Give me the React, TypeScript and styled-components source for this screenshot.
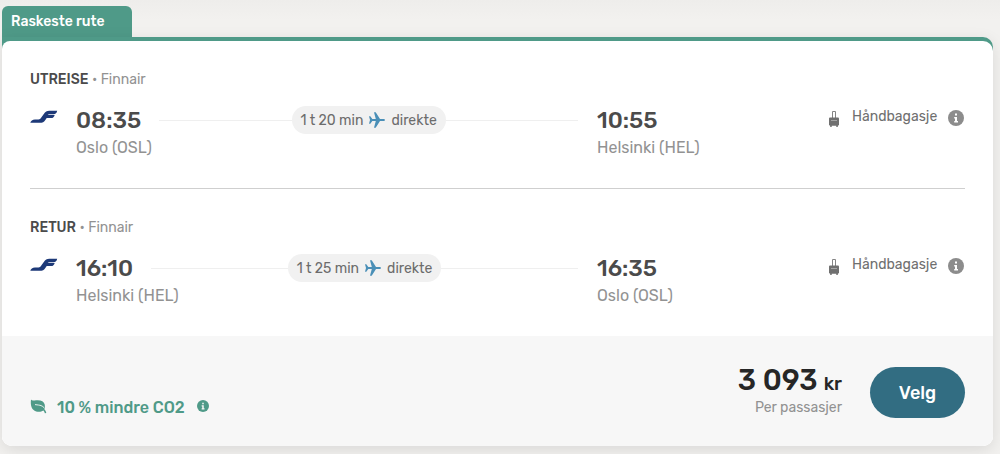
import React from "react";
import styled, { createGlobalStyle } from "styled-components";

const GlobalStyle = createGlobalStyle`
  * { box-sizing: border-box; }
  body {
    margin: 0;
    background: linear-gradient(#eeedeb, #f2f1ef 20px) #f2f1ef;
    font-family: Rubik, Roboto, "Liberation Sans", sans-serif;
    color: #4b4b4b;
  }
`;

const Page = styled.main`
  padding: 6px 7px 8px 2px;
`;

const Tab = styled.div`
  width: 130px;
  height: 31px;
  padding: 0 9px;
  border-radius: 6px 6px 0 0;
  background: #4f9a88;
  color: #fff;
  font-size: 14px;
  font-weight: 500;
  line-height: 32px;
  white-space: nowrap;
`;

const Ticket = styled.article`
  padding-top: 4px;
  border-radius: 0 10px 10px 10px;
  background: linear-gradient(#4f9a88 20px, #fff 20px);
  box-shadow: 0 4px 16px rgba(0, 0, 0, 0.1);
`;

const Card = styled.div`
  overflow: hidden;
  border-radius: 8px 10px 10px 10px;
  background: #fff;
`;

const Legs = styled.div`
  padding: 0 28px;
`;

const Leg = styled.section`
  height: 147px;
  padding-top: 29px;

  & + & {
    height: 148px;
    border-top: 1px solid #cfcfcf;
  }
`;

const LegTitle = styled.h2`
  margin: 0 0 16px;
  font-size: 14px;
  font-weight: 400;
  line-height: 20px;
  color: #929292;

  strong {
    font-weight: 500;
    color: #4b4b4b;
  }
`;

const LegRow = styled.div`
  display: grid;
  grid-template-columns: 46px minmax(0, 521fr) minmax(0, 231fr) 137px;
`;

const LogoCell = styled.div`
  padding-top: 4px;

  svg {
    display: block;
  }
`;

const TimeLine = styled.div`
  display: flex;
  align-items: center;
  height: 28px;
  padding-right: 19px;
`;

const Time = styled.span`
  font-size: 23px;
  font-weight: 500;
  line-height: 28px;
`;

const City = styled.div`
  margin-top: 4px;
  font-size: 16px;
  line-height: 20px;
  color: #929292;
`;

const Track = styled.div`
  display: flex;
  flex: 1;
  align-items: center;
  margin-left: 18px;

  &::before,
  &::after {
    content: "";
    flex: 1;
    height: 1px;
    background: #efefef;
  }
`;

const Duration = styled.span`
  display: flex;
  align-items: center;
  gap: 5px;
  height: 28px;
  padding: 0 9px;
  border-radius: 14px;
  background: #f1f1f1;
  color: #6c6c6c;
  font-size: 14px;
  white-space: nowrap;
`;

const Baggage = styled.div`
  display: flex;
  align-items: center;
  height: 26px;
  font-size: 14px;
  line-height: 20px;
  color: #6f6f6f;
`;

const BaggageLabel = styled.span`
  margin: 0 auto 4px 12px;
`;

const IconButton = styled.button`
  display: flex;
  padding: 0;
  border: 0;
  background: none;
  color: inherit;
  cursor: pointer;
`;

const Footer = styled.footer`
  display: flex;
  align-items: flex-end;
  height: 110px;
  padding: 0 28px 28px;
  background: #f7f7f7;
`;

const Emission = styled.div`
  display: flex;
  align-items: center;
  margin-right: auto;
  color: #4f9a88;
  font-size: 16px;
  font-weight: 500;
  line-height: 20px;

  svg {
    margin-bottom: 4px;
  }
`;

const EmissionLabel = styled.span`
  margin: 0 12px 0 10px;
`;

const Price = styled.div`
  margin-right: 28px;
  text-align: right;
`;

const Amount = styled.div`
  display: flex;
  align-items: baseline;
  justify-content: flex-end;
  gap: 6px;
  color: #262626;
  font-size: 29px;
  font-weight: 500;
  line-height: 28px;

  small {
    font-size: 19px;
  }
`;

const PerPassenger = styled.div`
  font-size: 14px;
  line-height: 20px;
  color: #929292;
`;

const SelectButton = styled.button`
  width: 95px;
  height: 51px;
  border: 0;
  border-radius: 26px;
  background: #326d82;
  color: #fff;
  font: inherit;
  font-size: 18px;
  font-weight: 500;
  cursor: pointer;
`;

const AirlineLogo = () => (
  <svg width="28" height="14" viewBox="0 0 28 14" role="img" aria-label="Finnair">
    <path
      fill="#1d3978"
      d="M.3 12.800C.8 11 2.500 9.500 5 9.400h3.500c1.300 0 1.800-.6 2.600-1.600l2.700-3.900C15.400 1.600 16.800.8 19.300.8H27.200c-.4 2.200-1.500 3.400-3.700 3.400h-4.200c-.8 0-1.200.2-1.600.7h7c-.5 2-1.700 3.100-3.500 3.100h-4.500l-1.200 1.700c-1.400 2.300-3 3.100-5.800 3.100Z"
    />
  </svg>
);

const Plane = () => (
  <svg width="18" height="18" viewBox="0 0 18 18" aria-hidden="true">
    <path
      fill="#4a8fb7"
      d="M1 5.200h1.300l2 2.800h3.500L6 1.200h1.700L12 8h3.200c1 0 1.800.4 1.800 1s-.8 1-1.800 1H12l-4.300 6.800H6L7.800 10H4.300l-2 2.800H1L2 9Z"
    />
  </svg>
);

const Suitcase = () => (
  <svg width="12" height="16" viewBox="0 0 12 16" aria-hidden="true">
    <path fill="none" stroke="#858585" d="M4.500 7V.5h3V7" />
    <path
      fill="#707070"
      d="M2.200 6.500h7.600c.7 0 1.200.5 1.200 1.200v5.800c0 .7-.5 1.200-1.200 1.200V16H8.300v-1.300H3.700V16H2.200v-1.300C1.500 14.700 1 14.200 1 13.500V7.700c0-.7.500-1.200 1.200-1.200Z"
    />
    <path stroke="#a4a4a4" d="M3 9.500h6" />
  </svg>
);

const Leaf = () => (
  <svg width="17" height="15" viewBox="0 0 17 15" aria-hidden="true">
    <path
      fill="#4f9a88"
      d="M1 .5C2 1.700 3.500 1.600 6 1.300c4.500-.5 8 .8 8.800 4.500.3 1.500.1 3-.4 4.500.8.8 1.500 2 1.900 3.700l-1.400.3c-.3-1.200-.8-2.100-1.500-2.900-2 1.400-4.700 1.800-7.200 1C1.700 11 .2 6.600 1 .5Z"
    />
    <path fill="none" stroke="#f7f7f7" strokeWidth=".9" d="M5 5.600c3 .4 4.700.5 6 1 1.300.5 2.300 1.200 3.200 2.200" />
  </svg>
);

const InfoIcon = ({ size, mark = "#fff" }: { size: number; mark?: string }) => (
  <svg width={size} height={size} viewBox="0 0 16 16" aria-hidden="true">
    <circle cx="8" cy="8" r="8" fill="currentColor" />
    <path fill={mark} d="M7 3.500h2v2H7ZM6.200 7H9v4h1v1.500H6.200V11H7V8.500h-.8Z" />
  </svg>
);

const InfoButton = styled(IconButton)`
  color: #8c8c8c;
  margin: 0 1px 2px 0;
`;

const legs = [
  { name: "UTREISE", depart: "08:35", from: "Oslo (OSL)", duration: "1 t 20 min", arrive: "10:55", to: "Helsinki (HEL)" },
  { name: "RETUR", depart: "16:10", from: "Helsinki (HEL)", duration: "1 t 25 min", arrive: "16:35", to: "Oslo (OSL)" },
];

export default function App() {
  return (
    <>
      <GlobalStyle />
      <Page>
        <Tab>Raskeste rute</Tab>
        <Ticket>
          <Card>
            <Legs>
              {legs.map((leg) => (
                <Leg key={leg.name}>
                  <LegTitle>
                    <strong>{leg.name}</strong> • Finnair
                  </LegTitle>
                  <LegRow>
                    <LogoCell>
                      <AirlineLogo />
                    </LogoCell>
                    <div>
                      <TimeLine>
                        <Time>{leg.depart}</Time>
                        <Track>
                          <Duration>
                            {leg.duration}
                            <Plane />
                            direkte
                          </Duration>
                        </Track>
                      </TimeLine>
                      <City>{leg.from}</City>
                    </div>
                    <div>
                      <TimeLine>
                        <Time>{leg.arrive}</Time>
                      </TimeLine>
                      <City>{leg.to}</City>
                    </div>
                    <Baggage>
                      <Suitcase />
                      <BaggageLabel>Håndbagasje</BaggageLabel>
                      <InfoButton type="button" aria-label="Om håndbagasje">
                        <InfoIcon size={16} />
                      </InfoButton>
                    </Baggage>
                  </LegRow>
                </Leg>
              ))}
            </Legs>
            <Footer>
              <Emission>
                <Leaf />
                <EmissionLabel>10 % mindre CO2</EmissionLabel>
                <IconButton type="button" aria-label="Om utslipp">
                  <InfoIcon size={12} mark="#f7f7f7" />
                </IconButton>
              </Emission>
              <Price>
                <Amount>
                  <span>3 093</span>
                  <small>kr</small>
                </Amount>
                <PerPassenger>Per passasjer</PerPassenger>
              </Price>
              <SelectButton type="button">Velg</SelectButton>
            </Footer>
          </Card>
        </Ticket>
      </Page>
    </>
  );
}
